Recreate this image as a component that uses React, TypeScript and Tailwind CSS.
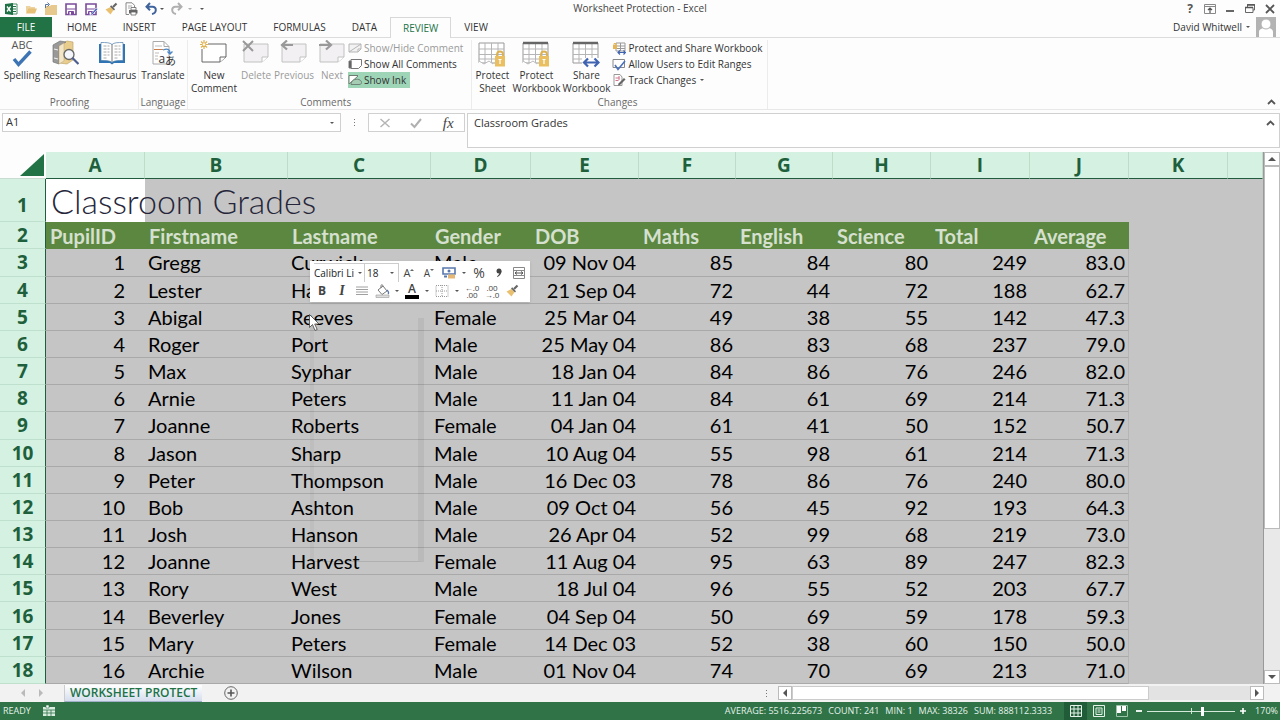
import React from 'react';

const ROWS = [
  [1, 'Gregg', 'Curwick', 'Male', '09 Nov 04', 85, 84, 80, 249, '83.0'],
  [2, 'Lester', 'Hammond', 'Male', '21 Sep 04', 72, 44, 72, 188, '62.7'],
  [3, 'Abigal', 'Reeves', 'Female', '25 Mar 04', 49, 38, 55, 142, '47.3'],
  [4, 'Roger', 'Port', 'Male', '25 May 04', 86, 83, 68, 237, '79.0'],
  [5, 'Max', 'Syphar', 'Male', '18 Jan 04', 84, 86, 76, 246, '82.0'],
  [6, 'Arnie', 'Peters', 'Male', '11 Jan 04', 84, 61, 69, 214, '71.3'],
  [7, 'Joanne', 'Roberts', 'Female', '04 Jan 04', 61, 41, 50, 152, '50.7'],
  [8, 'Jason', 'Sharp', 'Male', '10 Aug 04', 55, 98, 61, 214, '71.3'],
  [9, 'Peter', 'Thompson', 'Male', '16 Dec 03', 78, 86, 76, 240, '80.0'],
  [10, 'Bob', 'Ashton', 'Male', '09 Oct 04', 56, 45, 92, 193, '64.3'],
  [11, 'Josh', 'Hanson', 'Male', '26 Apr 04', 52, 99, 68, 219, '73.0'],
  [12, 'Joanne', 'Harvest', 'Female', '11 Aug 04', 95, 63, 89, 247, '82.3'],
  [13, 'Rory', 'West', 'Male', '18 Jul 04', 96, 55, 52, 203, '67.7'],
  [14, 'Beverley', 'Jones', 'Female', '04 Sep 04', 50, 69, 59, 178, '59.3'],
  [15, 'Mary', 'Peters', 'Female', '14 Dec 03', 52, 38, 60, 150, '50.0'],
  [16, 'Archie', 'Wilson', 'Male', '01 Nov 04', 74, 70, 69, 213, '71.0'],
];

const FIELDS = ['PupilID', 'Firstname', 'Lastname', 'Gender', 'DOB', 'Maths', 'English', 'Science', 'Total', 'Average'];
const COLUMNS = ['A', 'B', 'C', 'D', 'E', 'F', 'G', 'H', 'I', 'J', 'K', ''];

type IconProps = { className?: string };

const Caret = ({ className = 'text-[#555]' }: IconProps) => (
  <svg viewBox="0 0 4 2" className={`h-0.5 w-1 shrink-0 ${className}`}>
    <path d="M0 0h4L2 2z" fill="currentColor" />
  </svg>
);

const ChevronUp = () => (
  <svg viewBox="0 0 9 6" className="h-1.5 w-[9px]">
    <path d="M1 5l3.5-3.5L8 5" fill="none" stroke="#555" strokeWidth="1.8" />
  </svg>
);

/* Quick access icons */
const ExcelLogo = () => (
  <svg viewBox="0 0 14 14" className="size-3.5">
    <path d="M7 2h6v10H7z" fill="#fff" stroke="#217346" strokeWidth=".8" />
    <path d="M9 4.500h3M9 7h3M9 9.500h3" stroke="#217346" strokeWidth="1" />
    <path d="M1 2l8-1v12l-8-1z" fill="#1e7145" />
    <path d="M3 4.500l3.600 5M6.600 4.500L3 9.500" stroke="#fff" strokeWidth="1.300" />
  </svg>
);

const Folder = ({ isNew = false }: { isNew?: boolean }) => (
  <svg viewBox="0 0 14 14" className="size-3.5">
    {isNew ? (
      <>
        <path d="M1 4h5l1-1h6v10H1z" fill="#e7c98e" />
        <path d="M1.500 6V2.500h3M3.500 .5L5.500 2.500l-2 2" fill="none" stroke="#55729c" strokeWidth="1" />
      </>
    ) : (
      <>
        <path d="M2 4h4l1 1h4v2H4l-2 4z" fill="#edd3a1" />
        <path d="M4 6.500h9L11 11.500H2z" fill="#e7c078" />
      </>
    )}
  </svg>
);

const Floppy = ({ edit = false }: { edit?: boolean }) => (
  <svg viewBox="0 0 14 14" className="size-3.5">
    <path d="M2 2h10v10.500H2z" fill="#fff" stroke="#7a4b9b" strokeWidth="1.600" />
    <path d="M2.500 7h9M4.500 9.500h5v3h-5z" fill="#7a4b9b" stroke="#7a4b9b" />
    <path d="M5.500 10h1.500v2.500H5.500z" fill="#fff" />
    {edit && <path d="M6 13l6-7 2 1-6 6z" fill="#4b66b8" stroke="#fff" strokeWidth=".6" />}
  </svg>
);

const Brush = () => (
  <svg viewBox="0 0 14 14" className="size-3.5">
    <path d="M1.500 7.500l5-2.500 3 3-3 4.500z" fill="#e8c06f" />
    <path d="M6 4.500l4 4 1-1.200-3.800-4z" fill="#666" />
    <path d="M9 5l3.500-3.500" stroke="#666" strokeWidth="2.200" />
  </svg>
);

const Printer = () => (
  <svg viewBox="0 0 14 14" className="size-3.5">
    <path d="M2 .8h6l2.500 2.500V7M2 .8v11.700h3" fill="none" stroke="#888" />
    <path d="M4 4h4M4 6h2" stroke="#aaa" />
    <path d="M5 8h8.500v3.500H5z" fill="#666" />
    <path d="M7 5.500h5V8H7zM7 10h5v3H7z" fill="#fff" stroke="#666" strokeWidth=".8" />
  </svg>
);

const Undo = ({ className = '' }: IconProps) => (
  <svg viewBox="0 0 14 14" className={`size-3.5 ${className}`}>
    <path d="M6 1L2.500 4.700l3.500 3.600M3 4.700h5.500c4.500 0 4.500 6.300-.5 7.300" fill="none" stroke="currentColor" strokeWidth="2" />
  </svg>
);

/* Ribbon icons */
const Spelling = () => (
  <svg viewBox="0 0 28 28" className="size-7 overflow-visible">
    <text x="14" y="9" textAnchor="middle" fontSize="11" fill="#555" fontFamily="Open Sans, sans-serif">ABC</text>
    <path d="M6 19l4.500 5.500L22.500 11.500" fill="none" stroke="#3d74b3" strokeWidth="3.400" />
  </svg>
);

const Research = () => (
  <svg viewBox="0 0 28 28" className="size-7">
    <path d="M8 5l8-4 6 1v18l-6 4-8-1z" fill="#e9cd8d" stroke="#b79a60" strokeWidth=".6" />
    <path d="M2 5l7-4 6 1-7 4v18l-6-2z" fill="#999" stroke="#777" strokeWidth=".7" />
    <path d="M3 9l4 1M3 18l4 1" stroke="#eee" strokeWidth="1.200" />
    <path d="M8 6l5-3v18l-5 3z" fill="#f3e6c6" stroke="#b5a580" strokeWidth=".5" />
    <circle cx="18" cy="14.500" r="5" fill="#f4f6fb" stroke="#666" strokeWidth="1.300" />
    <path d="M21.500 18l6 6" stroke="#4d5f92" strokeWidth="2.200" />
  </svg>
);

const Thesaurus = () => (
  <svg viewBox="0 0 28 28" className="size-7">
    <path d="M1 4h26v19H16l-2 1.500L12 23H1z" fill="#2f74b5" />
    <path d="M3 2.500c5 0 9 0 11 2 2-2 6-2 11-2v18c-5 0-9 0-11 2-2-2-6-2-11-2z" fill="#fff" stroke="#4d7ba8" strokeWidth=".7" />
    <path d="M14 4.500v17.500" stroke="#777" />
    <path d="M5.500 6h6M5.500 9h6M5.500 12h6M5.500 15h6M5.500 18h4M16.500 6h6M16.500 9h6M16.500 12h6M16.500 15h6M16.500 18h4" stroke="#aaa" strokeDasharray="3 1" />
  </svg>
);

const Translate = () => (
  <svg viewBox="0 0 28 28" className="size-7">
    <path d="M4 1.500h11l5 5V24H4z" fill="#fff" stroke="#aaa" />
    <path d="M15 1.500v5h5" fill="none" stroke="#aaa" />
    <path d="M6 6h7M6 13h4M6 16h3M6 19h3" stroke="#bbb" />
    <path d="M5 9.500h9" stroke="#c97f4b" />
    <path d="M14 10c5-2 7 0 7 3M18.500 11.500l2.500 2.500 2.500-2.500" fill="none" stroke="#4b86c5" strokeWidth="1.300" />
    <text x="9.500" y="22.500" fontSize="12" fill="#333" fontFamily="Open Sans, sans-serif">a</text>
    <text x="16" y="25" fontSize="11" fill="#333" fontFamily="Noto Sans CJK JP, sans-serif">あ</text>
  </svg>
);

const Note = ({ kind }: { kind: 'new' | 'delete' | 'previous' | 'next' }) => {
  const active = kind === 'new';
  const stroke = active ? '#666' : '#c2c2c2';
  return (
    <svg viewBox="0 0 28 28" className="size-7">
      <path d="M2 4h24v13l-6 5H2z" fill={active ? '#fff' : '#f2f0f2'} stroke={stroke} />
      <path d="M26 17h-6v5" fill="#fff" stroke={stroke} />
      {kind === 'new' && (
        <>
          <path d="M0 0h8v9H0z" fill="#fdfdfd" />
          <path d="M4 0v9M0 4.500h8.500M1 1.500l6 6M7 1.500l-6 6" stroke="#dfb250" strokeWidth="1.200" />
          <circle cx="4" cy="4.500" r="1.300" fill="#fff" />
        </>
      )}
      {kind === 'delete' && <path d="M1 1l10 10M11 1L1 11" stroke="#999" strokeWidth="2" />}
      {kind === 'previous' && <path d="M13 5H2M7 .5L2 5l5 4.500" fill="none" stroke="#999" strokeWidth="2.200" />}
      {kind === 'next' && <path d="M1 5h12M8 .5L13 5 8 9.500" fill="none" stroke="#999" strokeWidth="2.200" />}
    </svg>
  );
};

const SheetIcon = ({ kind }: { kind: 'sheet' | 'book' | 'share' }) => (
  <svg viewBox="0 0 28 28" className="size-7">
    <path d="M1 3h25v20H1z" fill="#fff" stroke="#999" />
    <path d="M1 9h25M1 14.500h25M1 19h25M7 3v20M13.500 3v20M20 3v20" stroke="#b5b5b5" />
    {kind !== 'sheet' && <path d="M1 3h25" stroke="#666" strokeWidth="2.500" />}
    {kind === 'share' ? (
      <>
        <path d="M10 18h18v9H10z" fill="#fdfdfd" />
        <path d="M12 22.500h14M16 18.500l-4 4 4 4M22.500 18.500l4 4-4 4" fill="none" stroke="#3f63b0" strokeWidth="2.200" />
      </>
    ) : (
      <>
        <path d="M1 21l5 3 5-3 4 3v4H0z" fill="#fdfdfd" />
        <path d="M1 21l5 3 5-3 4 3" fill="none" stroke="#bbb" />
        <path d="M19 17v-2.500c0-4 6-4 6 0V17" fill="none" stroke="#ddb04f" strokeWidth="1.800" />
        <path d="M17 16h10v10.500H17z" fill="#e9bf62" />
        <path d="M22 19v5M20.500 19.500h3" stroke="#fff" strokeWidth="1.200" />
      </>
    )}
  </svg>
);

const SmallIcon = ({ kind }: { kind: 'hide' | 'all' | 'ink' | 'share' | 'ranges' | 'track' }) => (
  <svg viewBox="0 0 14 14" className="size-3.5 shrink-0">
    {kind === 'hide' && <path d="M1 3h12v5l-3 3H1zM13 8h-3v3M1 11L13 3" fill="#f2f2f2" stroke="#b5b5b5" />}
    {kind === 'all' && (
      <>
        <path d="M3 2.500h10.500v6l-3 3H3z" fill="#fff" stroke="#777" />
        <path d="M1 11V4h2v7z" fill="#555" stroke="#777" />
      </>
    )}
    {kind === 'ink' && (
      <>
        <path d="M1 2.500h9M1 2.500V11L10 3" fill="#fff" stroke="#6d7d72" />
        <path d="M3 11.500c0-4 4-6 8-5 4 2 3 5 0 5z" fill="#a6cdb4" stroke="#6d8476" />
      </>
    )}
    {kind === 'share' && (
      <>
        <path d="M4 2h9v8H4zM4 5h9M4 7.500h9M8.500 2v8" fill="none" stroke="#999" />
        <path d="M1 4h4v4H1z" fill="#e5b552" />
        <path d="M2 4V2.500h2V4" fill="none" stroke="#e5b552" />
        <path d="M6 11.500h7M8 9.500l-2 2 2 2M11.500 9.500l2 2-2 2" fill="none" stroke="#3f63b0" strokeWidth="1.200" />
      </>
    )}
    {kind === 'ranges' && (
      <>
        <path d="M1 2.500h11.500v8H1z" fill="#fff" stroke="#888" />
        <path d="M3 8l3 4.500L13 4" fill="none" stroke="#4a72bd" strokeWidth="1.600" />
      </>
    )}
    {kind === 'track' && (
      <>
        <path d="M2 1.500h6L10 4v8.500H2z" fill="#fff" stroke="#999" />
        <path d="M3.500 5h4M3.500 7.500h3M7 3v4" stroke="#d0708a" />
        <path d="M6 12.500l.5-2L12 5l1.500 1.500L8 12z" fill="#666" />
      </>
    )}
  </svg>
);

const BigButton = ({ icon, lines, width, disabled }: { icon: React.ReactNode; lines: string[]; width: string; disabled?: boolean }) => (
  <button
    type="button"
    disabled={disabled}
    className={`flex shrink-0 flex-col items-center leading-[13px] whitespace-nowrap ${width} ${disabled ? 'text-[#9a9a9a]' : 'text-[#333]'}`}
  >
    <span className="mb-px flex h-7">{icon}</span>
    {lines.map((l) => (
      <span key={l}>{l}</span>
    ))}
  </button>
);

const SmallButton = ({ icon, label, className = 'text-[#333]', caret }: { icon: React.ReactNode; label: string; className?: string; caret?: boolean }) => (
  <button type="button" className={`flex h-4 items-center gap-0.5 self-start whitespace-nowrap ${className}`}>
    {icon}
    {label}
    {caret && <span className="ml-0.5"><Caret /></span>}
  </button>
);

const Group = ({ name, className = '', children }: { name: string; className?: string; children: React.ReactNode }) => (
  <section aria-label={name} className={`flex flex-col justify-between border-r border-[#ececec] ${className}`}>
    <div className="flex items-start">{children}</div>
    <div className="text-center leading-[14px] text-[#6a6a6a]">{name}</div>
  </section>
);

const TitleBar = () => (
  <header className="grid h-[17px] grid-cols-[1fr_auto_1fr] items-center text-[#444]">
    <div className="flex items-center gap-1.5 pl-1">
      <ExcelLogo />
      <button type="button" aria-label="Open"><Folder /></button>
      <button type="button" aria-label="New"><Folder isNew /></button>
      <button type="button" aria-label="Save"><Floppy /></button>
      <button type="button" aria-label="Save As"><Floppy edit /></button>
      <button type="button" aria-label="Format Painter"><Brush /></button>
      <button type="button" aria-label="Print Preview"><Printer /></button>
      <button type="button" aria-label="Undo" className="flex items-center gap-0.5"><Undo className="text-[#3f649c]" /><Caret /></button>
      <button type="button" aria-label="Redo" className="flex items-center gap-1"><Undo className="-scale-x-100 text-[#b0b0b0]" /><Caret className="text-[#b0b0b0]" /></button>
      <button type="button" aria-label="Customize" className="ml-0.5"><Caret /></button>
    </div>
    <h1>Worksheet Protection - Excel</h1>
    <div className="flex items-center justify-end gap-2 pr-1">
      <button type="button" aria-label="Help" className="w-3 text-xs font-bold leading-4 text-[#555]">?</button>
      <button type="button" aria-label="Ribbon Display Options">
        <svg viewBox="0 0 12 12" className="size-3"><path d="M.5 1.500h11v9H.5zM.5 3.500h11" fill="none" stroke="#888" /><path d="M6 10V5M4 7l2-2 2 2" fill="none" stroke="#555" strokeWidth="1.200" /></svg>
      </button>
      <button type="button" aria-label="Minimize">
        <svg viewBox="0 0 12 12" className="size-3"><path d="M2 8h8" stroke="#555" strokeWidth="1.800" /></svg>
      </button>
      <button type="button" aria-label="Restore">
        <svg viewBox="0 0 12 12" className="size-3"><path d="M3.500 4V1.500h7V7H9M1.500 4.500H9v5H1.500z" fill="none" stroke="#666" /><path d="M1 4.500h8M3 2h8" stroke="#555" strokeWidth="1.500" /></svg>
      </button>
      <button type="button" aria-label="Close">
        <svg viewBox="0 0 12 12" className="size-3"><path d="M2 2l8 8M10 2l-8 8" stroke="#555" strokeWidth="1.800" /></svg>
      </button>
    </div>
  </header>
);

const Tabs = () => (
  <nav className="flex h-[21px] border-b border-[#dcdcdc] text-[#333]">
    <button type="button" className="mr-0.5 h-5 w-[52px] bg-[#217346] pt-px text-white">FILE</button>
    {['HOME', 'INSERT', 'PAGE LAYOUT', 'FORMULAS', 'DATA', 'REVIEW', 'VIEW'].map((tab) =>
      tab === 'REVIEW' ? (
        <button key={tab} type="button" className="h-[21px] border border-b-0 border-[#d8d8d8] bg-[#fdfdfd] px-3 text-[#217346]">{tab}</button>
      ) : (
        <button key={tab} type="button" className="px-[13px] pt-px">{tab}</button>
      )
    )}
    <div className="ml-auto flex items-center gap-1 pr-1">
      <button type="button" className="flex items-center gap-1">David Whitwell <Caret /></button>
      <svg viewBox="0 0 20 20" className="ml-0.5 size-5">
        <path d="M0 0h20v20H0z" fill="#b3b3b3" />
        <path d="M3 20v-5c0-3 3-4 7-4s7 1 7 4v5z" fill="#fff" />
        <circle cx="10" cy="7" r="5" fill="#fff" stroke="#b3b3b3" />
      </svg>
    </div>
  </nav>
);

const Ribbon = () => (
  <div className="flex h-[72px] border-b border-[#e8e8e8] pt-0.5">
    <Group name="Proofing" className="pl-px">
      <BigButton icon={<Spelling />} lines={['Spelling']} width="w-[42px]" />
      <BigButton icon={<Research />} lines={['Research']} width="w-[43px]" />
      <BigButton icon={<Thesaurus />} lines={['Thesaurus']} width="w-[52px]" />
    </Group>
    <Group name="Language">
      <BigButton icon={<Translate />} lines={['Translate']} width="w-12" />
    </Group>
    <Group name="Comments" className="pr-2">
      <BigButton icon={<Note kind="new" />} lines={['New', 'Comment']} width="w-[52px]" />
      <BigButton icon={<Note kind="delete" />} lines={['Delete']} width="w-8" disabled />
      <BigButton icon={<Note kind="previous" />} lines={['Previous']} width="w-11" disabled />
      <BigButton icon={<Note kind="next" />} lines={['Next']} width="w-8" disabled />
      <div className="flex flex-col">
        <SmallButton icon={<SmallIcon kind="hide" />} label="Show/Hide Comment" className="text-[#9a9a9a]" />
        <SmallButton icon={<SmallIcon kind="all" />} label="Show All Comments" />
        <SmallButton icon={<SmallIcon kind="ink" />} label="Show Ink" className="bg-[#9fd5b7] pr-1 text-[#333]" />
      </div>
    </Group>
    <Group name="Changes" className="pr-1">
      <BigButton icon={<SheetIcon kind="sheet" />} lines={['Protect', 'Sheet']} width="w-10" />
      <BigButton icon={<SheetIcon kind="book" />} lines={['Protect', 'Workbook']} width="w-12" />
      <BigButton icon={<SheetIcon kind="share" />} lines={['Share', 'Workbook']} width="w-[52px]" />
      <div className="flex flex-col">
        <SmallButton icon={<SmallIcon kind="share" />} label="Protect and Share Workbook" />
        <SmallButton icon={<SmallIcon kind="ranges" />} label="Allow Users to Edit Ranges" />
        <SmallButton icon={<SmallIcon kind="track" />} label="Track Changes" caret />
      </div>
    </Group>
    <button type="button" aria-label="Collapse the Ribbon" className="mt-auto mr-1 mb-1 ml-auto"><ChevronUp /></button>
  </div>
);

const FormulaBar = () => (
  <div className="mt-[3px] mb-1 flex h-[35px] items-start pl-0.5">
    <label className="flex h-[19px] w-[339px] items-center border border-[#d0d0d0] bg-white pr-1.5">
      <input aria-label="Name Box" defaultValue="A1" className="h-4 min-w-0 flex-1 pl-[3px] text-[11px] text-[#333] outline-none" />
      <Caret />
    </label>
    <div className="flex h-[19px] w-[27px] flex-col items-center justify-center gap-0.5">
      <i className="size-px bg-[#777]" /><i className="size-px bg-[#777]" /><i className="size-px bg-[#777]" />
    </div>
    <div className="flex h-[19px] w-[97px] items-center justify-around border border-[#d0d0d0] bg-white">
      <button type="button" aria-label="Cancel"><svg viewBox="0 0 12 12" className="size-3"><path d="M1.500 2l9 8M10.500 2l-9 8" stroke="#b5b5b5" strokeWidth="1.500" /></svg></button>
      <button type="button" aria-label="Enter"><svg viewBox="0 0 12 12" className="size-3"><path d="M1 6.500l3.500 3.500L11 2" fill="none" stroke="#b0b0b0" strokeWidth="2" /></svg></button>
      <button type="button" className="w-3 font-['Liberation_Serif',serif] text-[15px] leading-4 italic text-[#444]">fx</button>
    </div>
    <div className="ml-0.5 flex h-[35px] flex-1 items-start border border-[#d0d0d0] bg-white pr-1">
      <textarea aria-label="Formula Bar" defaultValue="Classroom Grades" className="h-8 flex-1 resize-none pt-px pl-1.5 text-[11px] leading-4 text-[#333] outline-none" />
      <button type="button" aria-label="Collapse Formula Bar" className="pt-1.5"><ChevronUp /></button>
    </div>
  </div>
);

const tool = 'flex w-5 items-center justify-center';
const drop = 'flex w-2.5 items-center justify-center';

const MiniToolbar = () => (
  <div role="toolbar" aria-label="Formatting" className="absolute top-[109px] left-[310px] h-[41px] w-[220px] bg-white pt-0.5 text-[#444] shadow">
    <div className="flex h-[19px] items-center pl-1">
      <span className="relative flex h-[19px] w-[51px] items-center border-t border-r border-[#ccc]">
        <select aria-label="Font" className="w-full appearance-none text-[10px] leading-4 text-[#222]"><option>Calibri Li</option></select>
        <span className="absolute right-0.5"><Caret /></span>
      </span>
      <span className="relative flex h-[19px] w-[34px] items-center border-t border-r border-[#ccc]">
        <select aria-label="Font Size" className="w-full appearance-none pl-0.5 text-[10px] leading-4 text-[#222]"><option>18</option></select>
        <span className="absolute right-1"><Caret /></span>
      </span>
      <button type="button" aria-label="Increase Font Size" className={tool}>
        <span className="text-[11px] leading-4">A</span>
        <svg viewBox="0 0 4 8" className="h-2 w-1"><path d="M0 2l2-2 2 2z" fill="#666" /></svg>
      </button>
      <button type="button" aria-label="Decrease Font Size" className={tool}>
        <span className="text-[10px] leading-4">A</span>
        <svg viewBox="0 0 4 8" className="h-2 w-1"><path d="M0 0l2 2 2-2z" fill="#666" /></svg>
      </button>
      <button type="button" aria-label="Accounting Format" className="flex items-center">
        <span className={tool}>
          <svg viewBox="0 0 14 14" className="size-3.5"><path d="M1 2h12v6H1z" fill="#fff" stroke="#5878ad" strokeWidth="1.600" /><circle cx="7" cy="5" r="1.500" fill="#5878ad" /><path d="M6 8.500h7v4H6z" fill="#e6b875" /><path d="M2 9.500h3v2H2z" fill="#5878ad" /></svg>
        </span>
        <span className={drop}><Caret /></span>
      </button>
      <button type="button" aria-label="Percent" className={`${tool} text-sm leading-4`}>%</button>
      <button type="button" aria-label="Comma Style" className={tool}><svg viewBox="0 0 8 12" className="h-3 w-2"><circle cx="4" cy="4" r="2.500" fill="#444" /><path d="M6.500 4c0 3-2 5-4 6l-.5-.8c1.500-1 2.500-2.500 2.500-4z" fill="#444" /></svg></button>
      <button type="button" aria-label="Merge and Center" className={tool}><svg viewBox="0 0 14 14" className="size-3.5"><path d="M1.500 1.500h11v11h-11zM1.500 4.500h11M1.500 9.500h11" fill="none" stroke="#888" /><path d="M3 7h8M5 5.500L3 7l2 1.500M9 5.500L11 7 9 8.500" fill="none" stroke="#555" /></svg></button>
    </div>
    <div className="flex h-[17px] items-center pl-0.5">
      <button type="button" className={`${tool} text-xs font-bold leading-4`}>B</button>
      <button type="button" className={`${tool} font-['Liberation_Serif',serif] text-sm leading-4 font-bold italic`}>I</button>
      <button type="button" aria-label="Center" className={tool}><svg viewBox="0 0 12 12" className="size-3"><path d="M0 2h12M0 4.500h12M0 7h12M0 9.500h12" stroke="#888" strokeWidth=".8" /></svg></button>
      <button type="button" aria-label="Fill Color" className="flex items-center">
        <span className={tool}>
          <svg viewBox="0 0 15 14" className="h-3.5 w-[15px]"><path d="M3 6l5-4 4 5-5 3.500z" fill="#fff" stroke="#777" /><path d="M6 4V1.500C6 .5 8 .5 8 2" fill="none" stroke="#777" /><path d="M12 6c2 2 2 3 1 4" fill="none" stroke="#5878ad" strokeWidth="1.300" /><path d="M1 11h13v2.500H1z" fill="#ddd" stroke="#999" strokeWidth=".6" /></svg>
        </span>
        <span className={drop}><Caret /></span>
      </button>
      <button type="button" aria-label="Font Color" className="flex items-center">
        <span className={tool}>
          <span className="flex h-4 w-3.5 items-center justify-center border-b-4 border-black text-xs font-semibold leading-3">A</span>
        </span>
        <span className={drop}><Caret /></span>
      </button>
      <button type="button" aria-label="Borders" className="flex items-center">
        <span className={tool}>
          <svg viewBox="0 0 14 14" className="size-3.5"><path d="M1 1.500h12v11H1zM7 1v12M1 7h12" fill="none" stroke="#999" strokeDasharray="1 1" /></svg>
        </span>
        <span className={drop}><Caret /></span>
      </button>
      <button type="button" aria-label="Increase Decimal" className={`${tool} flex-col text-[8px] leading-[7px]`}><span>←.0</span><span>.00</span></button>
      <button type="button" aria-label="Decrease Decimal" className={`${tool} flex-col text-[8px] leading-[7px]`}><span>.00</span><span>→.0</span></button>
      <button type="button" aria-label="Format Painter" className={tool}><Brush /></button>
    </div>
  </div>
);

const rowHead = 'border-r border-r-[#215c3f] border-b border-b-[#bfe0cd] bg-[#d4f1e1] p-0 text-center font-["Open_Sans",sans-serif] text-[19px] leading-5 font-bold text-[#205f3c]';

const Sheet = () => (
  <table className="h-full w-full table-fixed border-separate border-spacing-0 font-['Lato',sans-serif] text-xl leading-6">
    <colgroup>
      <col className="w-[46px]" />
      <col className="w-[99px]" />
      <col className="w-[143px]" />
      <col className="w-[143px]" />
      <col className="w-[100px]" />
      <col className="w-[108px]" />
      <col className="w-[97px]" />
      <col className="w-[97px]" />
      <col className="w-[98px]" />
      <col className="w-[99px]" />
      <col className="w-[99px]" />
      <col className="w-[99px]" />
      <col />
    </colgroup>
    <thead>
      <tr className="h-[27px]">
        <td className="border-b border-[#c9dcd1] bg-[#fdfdfd] p-0">
          <svg viewBox="0 0 46 26" className="block h-[26px] w-[46px]"><path d="M44 2v22H20z" fill="#217346" /></svg>
        </td>
        {COLUMNS.map((c, i) => (
          <th key={i} className="border-r border-b border-r-[#bfdccb] border-b-[#215c3f] bg-[#d4f1e1] p-0 font-['Open_Sans',sans-serif] text-[19px] leading-5 font-bold text-[#205f3c]">{c}</th>
        ))}
      </tr>
    </thead>
    <tbody>
      <tr className="h-[43px]">
        <th className={`${rowHead} pt-2.5`}>1</th>
        <td className="bg-white p-0 pl-[5px] text-[34px] leading-10 font-light whitespace-nowrap text-[#26263a]">
          <span className="relative">Classroom Grades</span>
        </td>
        <td colSpan={11} />
      </tr>
      <tr className="h-[27px]">
        <th className={rowHead}>2</th>
        {FIELDS.map((f) => (
          <th key={f} className="bg-[#5b8740] p-0 pl-1 text-left font-bold text-[#d6e0cf]">{f}</th>
        ))}
        <td colSpan={2} />
      </tr>
      {ROWS.map((row, r) => (
        <tr key={r} className="h-[27px] text-black">
          <th className={rowHead}>{r + 3}</th>
          {row.map((cell, i) => (
            <td
              key={i}
              className={`border-b border-[#a9a9a9] p-0 whitespace-nowrap ${i === 0 ? 'pr-5 text-right' : i < 4 ? 'pl-[3px]' : i === 9 ? 'border-r border-r-[#b5b5b5] pr-[3px] text-right' : 'pr-[3px] text-right'}`}
            >
              {cell}
            </td>
          ))}
          <td colSpan={2} />
        </tr>
      ))}
    </tbody>
  </table>
);

const Arrow = ({ d }: { d: string }) => (
  <svg viewBox="0 0 8 8" className="size-2"><path d={d} fill="#555" /></svg>
);

const StatusBar = () => (
  <footer className="flex h-[18px] items-center bg-[#2f7347] pr-0.5 pl-[3px] text-[9px] text-[#e4f2e9]">
    <span>READY</span>
    <svg viewBox="0 0 12 12" className="ml-3 size-3"><path d="M0 2h12v9H0z" fill="#d9ecdf" /><path d="M3 0h3v3H3z" fill="#fff" stroke="#2f7347" strokeWidth=".6" /><path d="M0 5h12M0 8h12M4 5v6M8 5v6" stroke="#2f7347" strokeWidth=".8" /></svg>
    <div className="ml-auto flex gap-1.5">
      <span>AVERAGE: 5516.225673</span>
      <span>COUNT: 241</span>
      <span>MIN: 1</span>
      <span>MAX: 38326</span>
      <span>SUM: 888112.3333</span>
    </div>
    <div className="ml-3 flex items-center">
      <button type="button" aria-label="Normal" className="flex h-[18px] w-[23px] items-center justify-center bg-[#1f5c37]"><svg viewBox="0 0 12 12" className="size-3"><path d="M.5.5h11v11H.5zM.5 4h11M.5 8h11M4 0v12M8 0v12" fill="none" stroke="#e4f2e9" /></svg></button>
      <button type="button" aria-label="Page Layout" className="flex w-[23px] justify-center"><svg viewBox="0 0 12 12" className="size-3"><path d="M.5.5h11v11H.5zM3 3h6v6.500H3zM4.500 5h3M4.500 7h3" fill="none" stroke="#e4f2e9" /></svg></button>
      <button type="button" aria-label="Page Break Preview" className="flex w-[23px] justify-center"><svg viewBox="0 0 12 12" className="size-3"><path d="M.5.5h11v11H.5z" fill="none" stroke="#9cc5aa" /><path d="M1 1h4v7H1zM6 1h4v5H6z" fill="#fff" /></svg></button>
    </div>
    <button type="button" aria-label="Zoom Out" className="ml-0.5"><svg viewBox="0 0 8 8" className="size-2"><path d="M1 4h6" stroke="#fff" strokeWidth="1.800" /></svg></button>
    <div className="relative mx-1 flex w-[88px] items-center">
      <span className="absolute left-[44px] h-1.5 w-px bg-[#cfe5d6]" />
      <input
        type="range"
        aria-label="Zoom"
        min={0}
        max={100}
        defaultValue={63}
        className="relative h-2.5 w-full appearance-none bg-transparent [&::-webkit-slider-runnable-track]:h-px [&::-webkit-slider-runnable-track]:bg-[#d5e9db] [&::-webkit-slider-thumb]:-mt-1 [&::-webkit-slider-thumb]:h-[9px] [&::-webkit-slider-thumb]:w-[3px] [&::-webkit-slider-thumb]:appearance-none [&::-webkit-slider-thumb]:bg-white"
      />
    </div>
    <button type="button" aria-label="Zoom In"><svg viewBox="0 0 8 8" className="size-2"><path d="M1 4h6M4 1v6" stroke="#fff" strokeWidth="1.600" /></svg></button>
    <span className="ml-2">170%</span>
  </footer>
);

const App: React.FC = () => {
  return (
    <div className="flex h-screen flex-col overflow-hidden bg-[#fdfdfd] font-['Open_Sans',sans-serif] text-[10px]">
      <TitleBar />
      <Tabs />
      <Ribbon />
      <FormulaBar />

      <main className="relative flex min-h-0 flex-1">
        <div className="relative min-w-0 flex-1 overflow-hidden border-r border-[#999] bg-[#c5c5c5]">
          <Sheet />
          {/* fading drag outline */}
          <div className="absolute top-[166px] left-[310px] h-[244px] w-[114px] border-r-6 border-b border-l-4 border-r-black/5 border-b-black/10 border-l-black/3" />
        </div>
        <MiniToolbar />
        <svg viewBox="0 0 12 18" className="absolute top-[162px] left-[309px] h-[18px] w-3">
          <path d="M.5.5v13l3-3 2.500 6 2.200-1-2.500-5.500H10z" fill="#fff" stroke="#444" strokeWidth=".8" />
        </svg>
        <div className="flex w-4 flex-col bg-[#e9e9e9]">
          <button type="button" aria-label="Scroll up" className="flex h-3.5 items-center justify-center border border-[#bbb] bg-white"><Arrow d="M0 6h8L4 2z" /></button>
          <div className="flex-1"><div className="h-[72%] border border-[#bbb] bg-white" /></div>
          <button type="button" aria-label="Scroll down" className="flex h-3.5 items-center justify-center border border-[#bbb] bg-white"><Arrow d="M0 2h8L4 6z" /></button>
        </div>
      </main>

      <div className="flex h-[18px] items-center bg-[#f3f2f2]">
        <div className="flex w-16 justify-center gap-2.5 opacity-35">
          <Arrow d="M6 0v8L2 4z" />
          <Arrow d="M2 0v8l4-4z" />
        </div>
        <button type="button" className="h-[17px] border-b border-[#9fb0c8] border-l border-l-[#ccc] bg-linear-to-b from-white to-[#d5deee] px-[5px] text-xs leading-4 font-semibold text-[#217346]">WORKSHEET PROTECT</button>
        <button type="button" aria-label="New sheet" className="ml-[22px]">
          <svg viewBox="0 0 14 14" className="size-3.5"><circle cx="7" cy="7" r="6.300" fill="none" stroke="#666" /><path d="M3.500 7h7M7 3.500v7" stroke="#555" strokeWidth="1.600" /></svg>
        </button>
        <div className="ml-auto flex h-full w-[514px] items-center pr-4">
          <div className="flex w-3 flex-col gap-0.5"><i className="size-px bg-[#777]" /><i className="size-px bg-[#777]" /><i className="size-px bg-[#777]" /></div>
          <button type="button" aria-label="Scroll left" className="flex h-3.5 w-3.5 items-center justify-center border border-[#bbb] bg-white"><Arrow d="M6 0v8L2 4z" /></button>
          <div className="h-3.5 flex-1 bg-[#e3e3e3]"><div className="h-3.5 w-[78%] border border-[#ccc] bg-white" /></div>
          <button type="button" aria-label="Scroll right" className="flex h-3.5 w-3.5 items-center justify-center border border-[#bbb] bg-white"><Arrow d="M2 0v8l4-4z" /></button>
        </div>
      </div>
      <StatusBar />
    </div>
  );
};

export default App;
